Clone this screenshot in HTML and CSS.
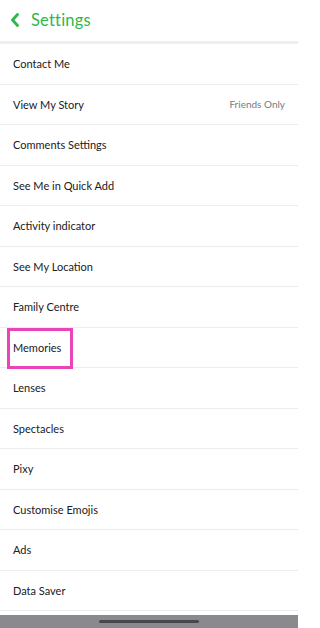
FILE: index.html
```html
<!DOCTYPE html>
<html>
<head>
<meta charset="utf-8">
<link rel="stylesheet" href="styles.css">
</head>
<body>
<div class="screen">
  <header class="topbar">
    <svg class="back" width="10" height="14" viewBox="0 0 10 14"><path d="M7.5 1.5 L2.5 7 L7.5 12.5" fill="none" stroke="#2db84d" stroke-width="2.8" stroke-linecap="round" stroke-linejoin="round"/></svg>
    <span class="title">Settings</span>
  </header>
  <ul class="list">
    <li class="row"><span>Contact Me</span></li>
    <li class="row"><span>View My Story</span><span class="value">Friends Only</span></li>
    <li class="row"><span>Comments Settings</span></li>
    <li class="row"><span>See Me in Quick Add</span></li>
    <li class="row"><span>Activity indicator</span></li>
    <li class="row"><span>See My Location</span></li>
    <li class="row"><span>Family Centre</span></li>
    <li class="row highlighted"><span>Memories</span><span class="mark"></span></li>
    <li class="row"><span>Lenses</span></li>
    <li class="row"><span>Spectacles</span></li>
    <li class="row"><span>Pixy</span></li>
    <li class="row"><span>Customise Emojis</span></li>
    <li class="row"><span>Ads</span></li>
    <li class="row"><span>Data Saver</span></li>
  </ul>
  <div class="homebar"><span class="indicator"></span></div>
</div>
</body>
</html>
```

FILE: styles.css
```css
html, body {
  margin: 0;
  padding: 0;
  background: #ffffff;
}
body {
  font-family: "Lato", "Open Sans", sans-serif;
  color: #202022;
}
.screen {
  width: 298px;
  height: 628px;
  display: flex;
  flex-direction: column;
  overflow: hidden;
}
.topbar {
  height: 44px;
  flex: none;
  display: flex;
  align-items: center;
  gap: 11px;
  padding-left: 10px;
  box-sizing: border-box;
  border-bottom: 3px solid #efeff0;
}
.back {
  margin-top: -1px;
}
.title {
  color: #2db84d;
  font-size: 16.5px;
  letter-spacing: 0.2px;
  margin-top: -1px;
}
.list {
  list-style: none;
  margin: 0;
  padding: 0;
  flex: none;
}
.row {
  height: 40.5px;
  box-sizing: border-box;
  border-bottom: 1px solid #ececee;
  display: flex;
  align-items: center;
  justify-content: space-between;
  padding: 0 13px 0 13px;
  font-size: 11px;
  position: relative;
}
.value {
  color: #7a7a80;
  font-size: 10px;
}
.mark {
  position: absolute;
  left: 7px;
  top: 0px;
  width: 66px;
  height: 41px;
  box-sizing: border-box;
  border: 3px solid #ea45b8;
}
.homebar {
  flex: 1;
  margin-top: 4px;
  background: #8a898e;
  display: flex;
  justify-content: center;
  align-items: center;
}
.indicator {
  width: 100px;
  height: 3.5px;
  border-radius: 2px;
  background: #48484c;
}
```
